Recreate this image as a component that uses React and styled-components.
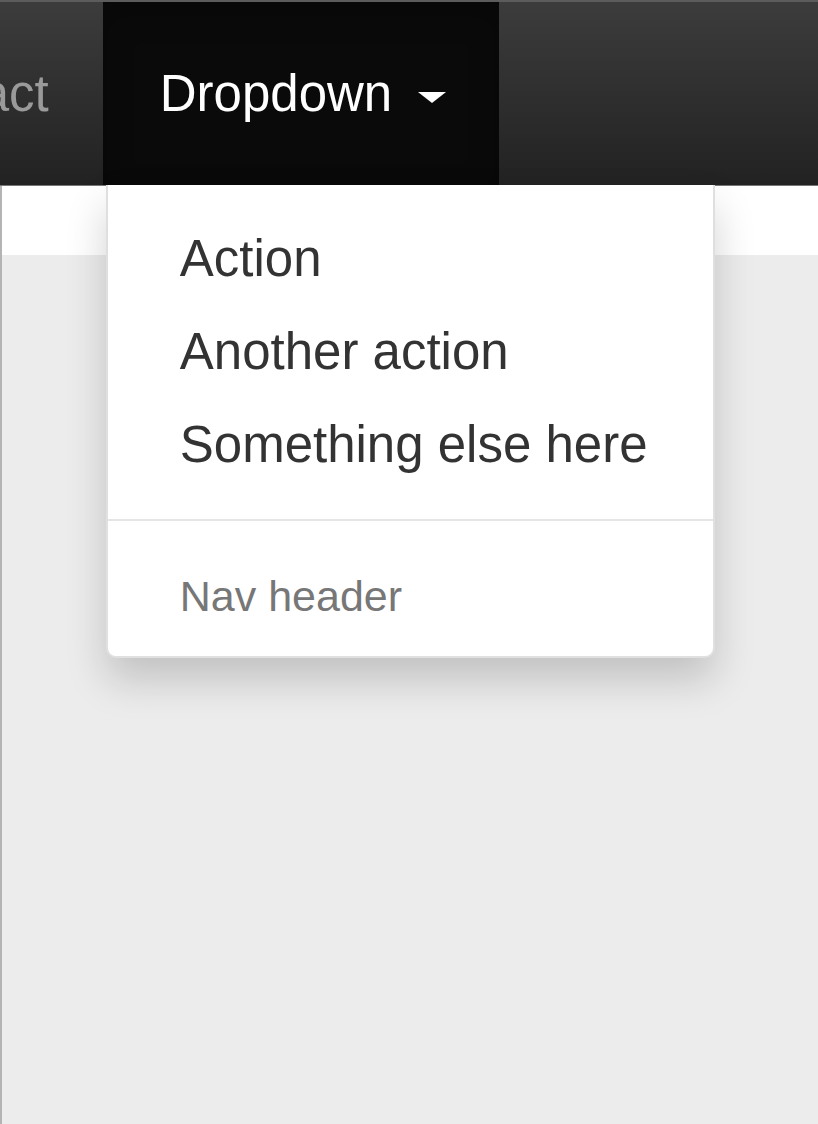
import React from "react";
import { styled, createGlobalStyle } from "styled-components";

const GlobalStyle = createGlobalStyle`
  html, body {
    margin: 0;
    padding: 0;
    height: 100%;
    overflow: hidden;
    background: #ececec;
  }
  #root {
    height: 100%;
  }
  * {
    box-sizing: border-box;
  }
`;

const Page = styled.div`
  display: flex;
  flex-direction: column;
  height: 1124px;
  font-family: "Liberation Sans", Arial, sans-serif;
`;

const Navbar = styled.nav`
  position: relative;
  z-index: 10;
  display: flex;
  height: 186px;
  flex-shrink: 0;
  border-top: 2px solid #5c5c5c;
  border-bottom: 1px solid #767676;
  background: linear-gradient(to bottom, #3c3c3c 0%, #222 100%);
`;

const NavList = styled.ul`
  display: flex;
  margin: 0 0 0 -181px;
  padding: 0;
  list-style: none;
`;

const NavItem = styled.li`
  position: relative;
  display: flex;
  align-items: center;
  height: 100%;
  padding: ${(p) => (p.$active ? "0 53px 0 57px" : "0 54px")};
  background: ${(p) => (p.$active ? "#0a0a0a" : "transparent")};
  box-shadow: ${(p) =>
    p.$active ? "inset 0 10px 30px rgba(0, 0, 0, 0.25)" : "none"};
`;

const NavLink = styled.a`
  font-size: 51px;
  line-height: 72px;
  color: ${(p) => (p.$active ? "#fff" : "#9a9a9a")};
  text-decoration: none;
  white-space: nowrap;
`;

const Caret = styled.span`
  display: inline-block;
  width: 0;
  height: 0;
  margin-left: 26px;
  vertical-align: middle;
  border-top: 11px solid #fff;
  border-left: 14px solid transparent;
  border-right: 14px solid transparent;
`;

const Menu = styled.ul`
  position: absolute;
  top: 100%;
  left: 3px;
  width: 609px;
  margin: 0;
  padding: 27px 0 18px;
  list-style: none;
  background: #fff;
  border: 2px solid rgba(0, 0, 0, 0.12);
  border-top: none;
  border-radius: 0 0 10px 10px;
  box-shadow: 0 22px 40px rgba(0, 0, 0, 0.18);
`;

const MenuItem = styled.li`
  padding: 10.5px 72px;
  font-size: 51px;
  line-height: 72px;
  color: #333;
  white-space: nowrap;
`;

const Divider = styled.li`
  height: 2px;
  margin: 28px 0 33px;
  background: #e5e5e5;
`;

const MenuHeader = styled.li`
  padding: 11px 72px;
  font-size: 43px;
  line-height: 62px;
  color: #777;
  white-space: nowrap;
`;

const Content = styled.main`
  display: flex;
  flex-direction: column;
  flex: 1;
  border-left: 2px solid #b4b4b4;
`;

const TopStrip = styled.div`
  height: 69px;
  background: #fff;
`;

const Jumbotron = styled.section`
  flex: 1;
  background: #ececec;
`;

const items = ["Action", "Another action", "Something else here"];

export default function App() {
  return (
    <>
      <GlobalStyle />
      <Page>
        <Navbar>
          <NavList>
            <NavItem>
              <NavLink href="#">Contact</NavLink>
            </NavItem>
            <NavItem $active>
              <NavLink href="#" $active>
                Dropdown
                <Caret />
              </NavLink>
              <Menu>
                {items.map((label) => (
                  <MenuItem key={label}>{label}</MenuItem>
                ))}
                <Divider />
                <MenuHeader>Nav header</MenuHeader>
              </Menu>
            </NavItem>
          </NavList>
        </Navbar>
        <Content>
          <TopStrip />
          <Jumbotron />
        </Content>
      </Page>
    </>
  );
}
